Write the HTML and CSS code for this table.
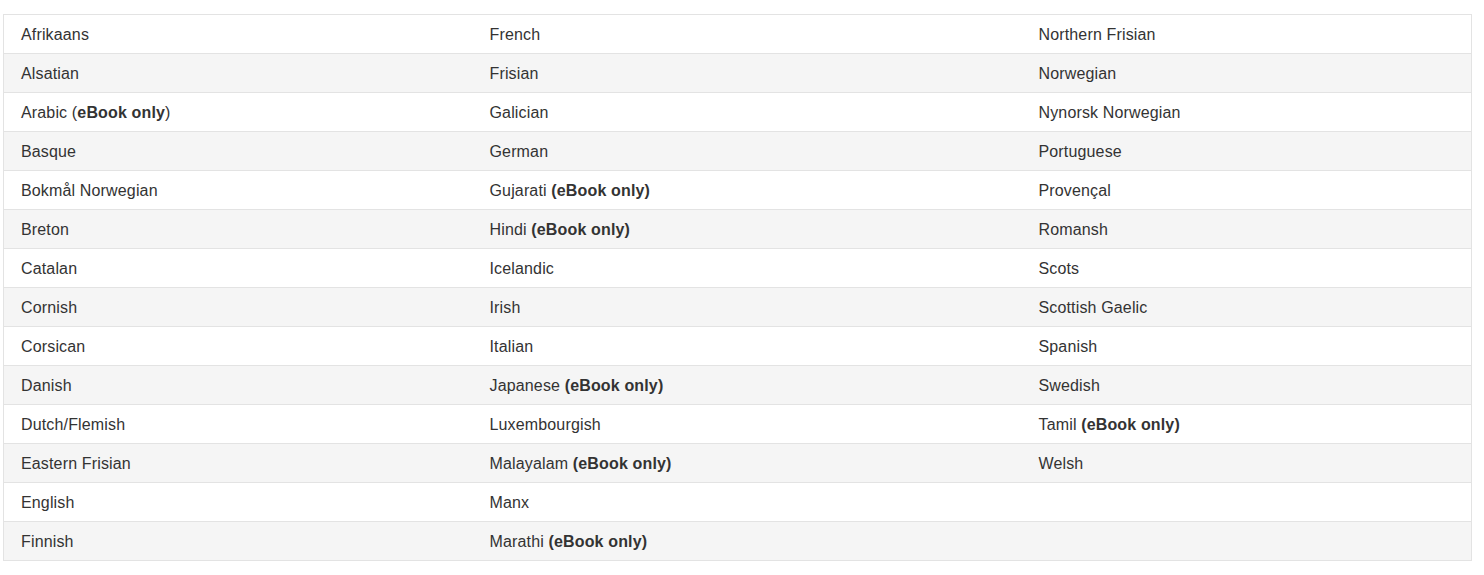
FILE: index.html
```html
<!DOCTYPE html>
<html>
<head>
<meta charset="utf-8">
<link rel="stylesheet" href="styles.css">
</head>
<body>
<div class="wrap">
<table class="langs">
<colgroup><col class="c1"><col class="c2"><col class="c3"></colgroup>
<tbody>
<tr><td>Afrikaans</td><td>French</td><td>Northern Frisian</td></tr>
<tr><td>Alsatian</td><td>Frisian</td><td>Norwegian</td></tr>
<tr><td>Arabic (<b>eBook only</b>)</td><td>Galician</td><td>Nynorsk Norwegian</td></tr>
<tr><td>Basque</td><td>German</td><td>Portuguese</td></tr>
<tr><td>Bokmål Norwegian</td><td>Gujarati <b>(eBook only)</b></td><td>Provençal</td></tr>
<tr><td>Breton</td><td>Hindi <b>(eBook only)</b></td><td>Romansh</td></tr>
<tr><td>Catalan</td><td>Icelandic</td><td>Scots</td></tr>
<tr><td>Cornish</td><td>Irish</td><td>Scottish Gaelic</td></tr>
<tr><td>Corsican</td><td>Italian</td><td>Spanish</td></tr>
<tr><td>Danish</td><td>Japanese <b>(eBook only)</b></td><td>Swedish</td></tr>
<tr><td>Dutch/Flemish</td><td>Luxembourgish</td><td>Tamil <b>(eBook only)</b></td></tr>
<tr><td>Eastern Frisian</td><td>Malayalam <b>(eBook only)</b></td><td>Welsh</td></tr>
<tr><td>English</td><td>Manx</td><td></td></tr>
<tr><td>Finnish</td><td>Marathi <b>(eBook only)</b></td><td></td></tr>
</tbody>
</table>
</div>
</body>
</html>
```
FILE: styles.css
```css
html, body { margin: 0; padding: 0; background: #fff; }
body {
  font-family: "Liberation Sans", Arial, sans-serif;
  font-size: 16px;
  color: #333;
  letter-spacing: 0.15px;
}
.wrap { padding: 14px 0 0 3px; }
.langs {
  width: 1469px;
  border-collapse: collapse;
  table-layout: fixed;
  border: 1px solid #e3e3e3;
}
.c1 { width: 469px; }
.c2 { width: 549px; }
.langs td {
  height: 36px;
  padding: 2px 16px 0 17px;
  border-top: 1px solid #e3e3e3;
  line-height: 20px;
  vertical-align: middle;
  white-space: nowrap;
}
.langs tr:nth-child(even) td { background: #f5f5f5; }
.langs b { font-weight: bold; }
```
